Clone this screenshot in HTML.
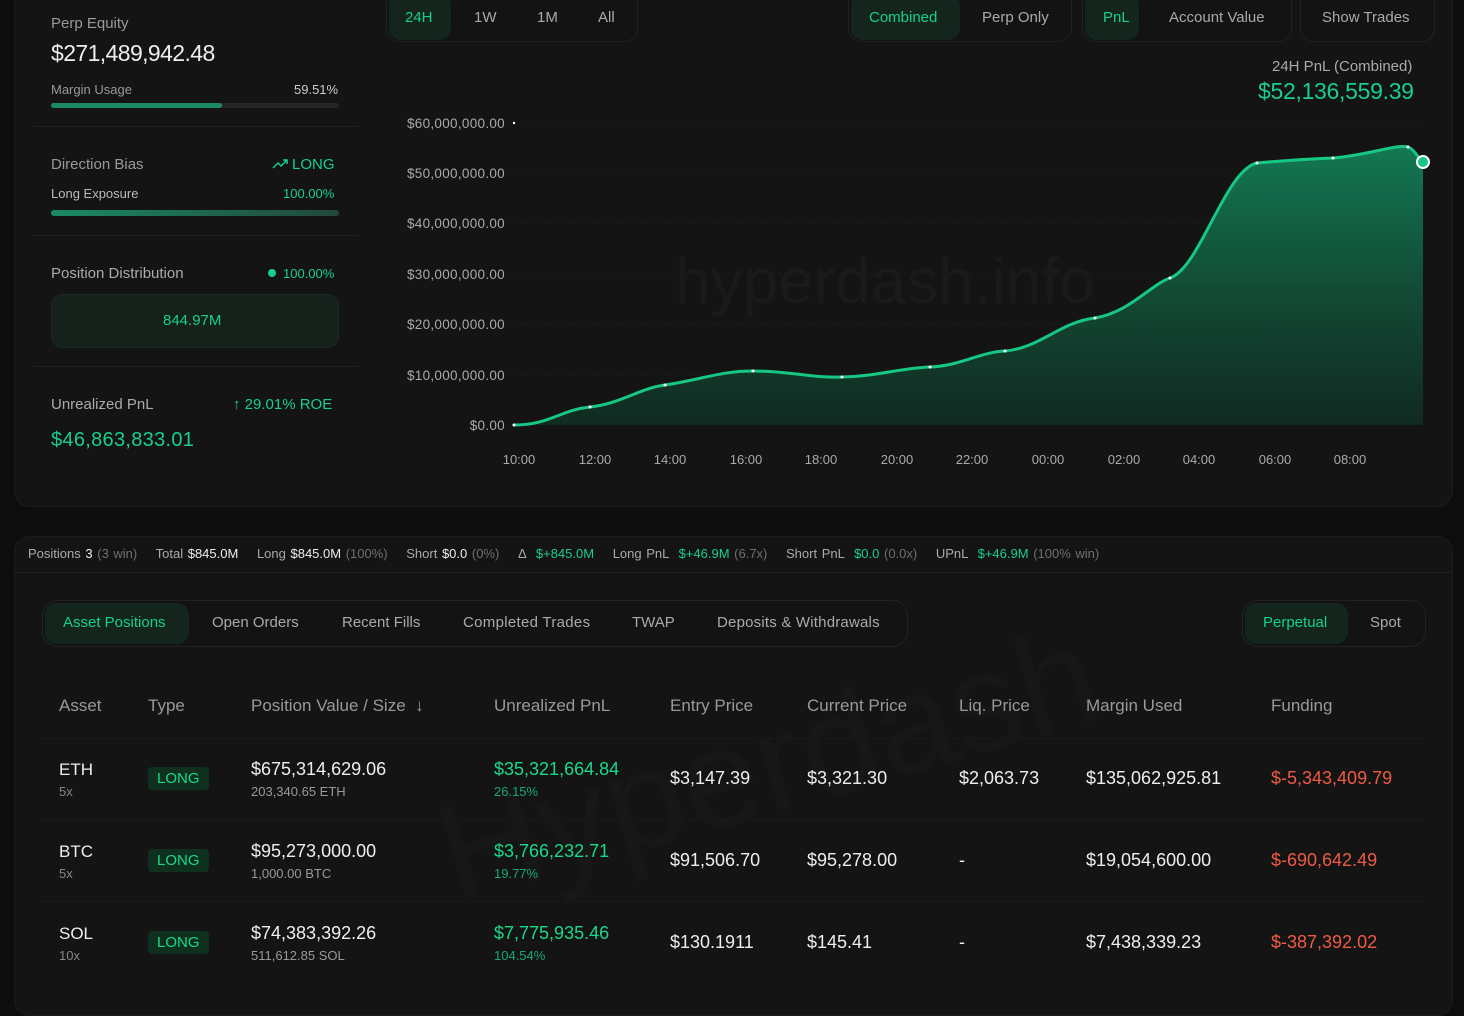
<!DOCTYPE html>
<html><head><meta charset="utf-8"><style>
*{margin:0;padding:0;box-sizing:border-box}
body{width:1464px;height:990px;background:#0d0d0d;font-family:"Liberation Sans",sans-serif;color:#e6e6e6;position:relative;overflow:hidden;letter-spacing:0}
.a{position:absolute;white-space:nowrap}
.g{color:#19cf8c}.m{color:#9a9a9a}.d{color:#6f6f6f}.r{color:#ef5a43}.w{color:#eee}
.card{position:absolute;background:#141414;border:1px solid #1c1c1c}
.pill{position:absolute;border:1px solid #222;border-radius:14px;background:#131313}
.act{position:absolute;background:#14251d;border-radius:12px}
.bar{position:absolute;height:5px;border-radius:3px;background:#262626}
.hl{position:absolute;height:1px;background:#202020}
.long{position:absolute;background:#10301f;color:#19d88c;font-size:15px;border-radius:4px;padding:3px 9px}
.st span.s{margin-right:14px}
</style></head><body>
<div class="card" style="left:14px;top:-20px;width:1439px;height:527px;border-radius:16px"></div>
<div class="a m" style="left:51px;top:15px;font-size:15px">Perp Equity</div>
<div class="a w" style="left:51px;top:40px;font-size:23px;letter-spacing:-0.6px">$271,489,942.48</div>
<div class="a m" style="left:51px;top:82px;font-size:13px">Margin Usage</div>
<div class="a w" style="left:294px;top:82px;font-size:13px;color:#ccc">59.51%</div>
<div class="bar" style="left:51px;top:103px;width:288px"></div>
<div class="bar" style="left:51px;top:103px;width:171px;background:#1a8a62"></div>
<div class="hl" style="left:33px;top:126px;width:325px"></div>
<div class="a m" style="left:51px;top:156px;font-size:15px">Direction Bias</div>
<div class="a g" style="left:272px;top:156px;font-size:15px"><svg width="16" height="12" viewBox="0 0 16 12" style="vertical-align:-1px;margin-right:4px"><path d="M1,10 L6,5 L9,8 L15,2 M11,2 L15,2 L15,6" fill="none" stroke="#19cf8c" stroke-width="1.5"/></svg>LONG</div>
<div class="a m" style="left:51px;top:186px;font-size:13px;color:#bbb">Long Exposure</div>
<div class="a g" style="left:283px;top:186px;font-size:13px">100.00%</div>
<div class="bar" style="left:51px;top:210px;width:288px;height:6px;background:linear-gradient(90deg,#1a8a62,#22483b)"></div>
<div class="hl" style="left:33px;top:235px;width:325px"></div>
<div class="a m" style="left:51px;top:265px;font-size:15px;color:#aaa">Position Distribution</div>
<div class="a" style="left:268px;top:269px;width:8px;height:8px;border-radius:50%;background:#19cf8c"></div>
<div class="a g" style="left:283px;top:266px;font-size:13px">100.00%</div>
<div class="a" style="left:51px;top:294px;width:288px;height:54px;border-radius:12px;background:#15221c;border:1px solid #1c2a23"></div>
<div class="a g" style="left:163px;top:312px;font-size:15px">844.97M</div>
<div class="hl" style="left:33px;top:366px;width:325px"></div>
<div class="a m" style="left:51px;top:396px;font-size:15px;color:#aaa">Unrealized PnL</div>
<div class="a g" style="left:233px;top:396px;font-size:15px">↑ 29.01% ROE</div>
<div class="a g" style="left:51px;top:429px;font-size:20px;letter-spacing:0.3px">$46,863,833.01</div>

<div class="pill" style="left:386px;top:-10px;width:252px;height:52px"></div>
<div class="act" style="left:389px;top:-6px;width:62px;height:46px"></div>
<div class="a g" style="left:405px;top:9px;font-size:15px">24H</div>
<div class="a m" style="left:474px;top:9px;font-size:15px;color:#aaa">1W</div>
<div class="a m" style="left:537px;top:9px;font-size:15px;color:#aaa">1M</div>
<div class="a m" style="left:598px;top:9px;font-size:15px;color:#aaa">All</div>

<div class="pill" style="left:848px;top:-10px;width:224px;height:52px"></div>
<div class="act" style="left:851px;top:-6px;width:109px;height:46px"></div>
<div class="a g" style="left:869px;top:9px;font-size:15px">Combined</div>
<div class="a m" style="left:982px;top:9px;font-size:15px;color:#aaa">Perp Only</div>
<div class="pill" style="left:1082px;top:-10px;width:210px;height:52px"></div>
<div class="act" style="left:1085px;top:-6px;width:54px;height:46px"></div>
<div class="a g" style="left:1103px;top:9px;font-size:15px">PnL</div>
<div class="a m" style="left:1169px;top:9px;font-size:15px;color:#aaa">Account Value</div>
<div class="pill" style="left:1300px;top:-10px;width:135px;height:52px"></div>
<div class="a m" style="left:1322px;top:9px;font-size:15px;color:#aaa">Show Trades</div>

<div class="a m" style="left:1272px;top:58px;font-size:15px;color:#aaa">24H PnL (Combined)</div>
<div class="a g" style="left:1258px;top:78px;font-size:23px;letter-spacing:-0.3px">$52,136,559.39</div>

<svg class="a" style="left:0;top:0" width="1464" height="500">
<defs><linearGradient id="f" x1="0" y1="0" x2="0" y2="1"><stop offset="0" stop-color="#138a5f" stop-opacity=".85"/><stop offset="1" stop-color="#0f3a2a" stop-opacity=".6"/></linearGradient></defs>
<g stroke="#1d1d1d" stroke-dasharray="3 3">
<line x1="514" y1="123" x2="1423" y2="123"/><line x1="514" y1="173" x2="1423" y2="173"/><line x1="514" y1="223" x2="1423" y2="223"/><line x1="514" y1="274" x2="1423" y2="274"/><line x1="514" y1="324" x2="1423" y2="324"/><line x1="514" y1="375" x2="1423" y2="375"/>
</g>
<text x="675" y="303" font-family="Liberation Sans" font-size="64" fill="#1a1a1a">hyperdash.info</text>
<path d="M514,425 C550,425 560,410 590,407 C620,404 640,388 665,385 C700,380 720,371 753,371 C790,371 810,378 842,377 C880,376 900,368 930,367 C960,366 980,352 1005,351 C1040,348 1060,322 1095,318 C1130,312 1150,285 1170,278 C1200,268 1225,170 1257,163 C1290,160 1310,159 1333,158 C1370,155 1395,144 1408,147 C1415,150 1418,158 1423,162 L1423,425 Z" fill="url(#f)"/>
<path d="M514,425 C550,425 560,410 590,407 C620,404 640,388 665,385 C700,380 720,371 753,371 C790,371 810,378 842,377 C880,376 900,368 930,367 C960,366 980,352 1005,351 C1040,348 1060,322 1095,318 C1130,312 1150,285 1170,278 C1200,268 1225,170 1257,163 C1290,160 1310,159 1333,158 C1370,155 1395,144 1408,147 C1415,150 1418,158 1423,162" fill="none" stroke="#17c784" stroke-width="3"/>
<g fill="#fff"><circle cx="514" cy="425" r="1.5"/><circle cx="590" cy="407" r="1.5"/><circle cx="665" cy="385" r="1.5"/><circle cx="753" cy="371" r="1.5"/><circle cx="842" cy="377" r="1.5"/><circle cx="930" cy="367" r="1.5"/><circle cx="1005" cy="351" r="1.5"/><circle cx="1095" cy="318" r="1.5"/><circle cx="1170" cy="278" r="1.5"/><circle cx="1257" cy="163" r="1.5"/><circle cx="1333" cy="158" r="1.5"/><circle cx="1408" cy="147" r="1.5"/><circle cx="514" cy="123" r="1.2"/></g>
<circle cx="1423" cy="162" r="6" fill="#17c784" stroke="#fff" stroke-width="2"/>
<g font-family="Liberation Sans" font-size="13.5" fill="#aaa" text-anchor="end" letter-spacing="0.3">
<text x="505" y="128">$60,000,000.00</text><text x="505" y="178">$50,000,000.00</text><text x="505" y="228">$40,000,000.00</text><text x="505" y="279">$30,000,000.00</text><text x="505" y="329">$20,000,000.00</text><text x="505" y="380">$10,000,000.00</text><text x="505" y="430">$0.00</text>
</g>
<g font-family="Liberation Sans" font-size="13" fill="#aaa" text-anchor="middle">
<text x="519" y="464">10:00</text><text x="595" y="464">12:00</text><text x="670" y="464">14:00</text><text x="746" y="464">16:00</text><text x="821" y="464">18:00</text><text x="897" y="464">20:00</text><text x="972" y="464">22:00</text><text x="1048" y="464">00:00</text><text x="1124" y="464">02:00</text><text x="1199" y="464">04:00</text><text x="1275" y="464">06:00</text><text x="1350" y="464">08:00</text>
</g>
</svg>

<div class="card" style="left:14px;top:536px;width:1439px;height:480px;border-radius:16px"></div>
<div class="hl" style="left:15px;top:572px;width:1437px"></div>
<div class="a st" style="left:28px;top:546px;font-size:13px;color:#aaa;word-spacing:1px"><span class="s">Positions <span class="w">3</span> <span class="d">(3 win)</span></span> <span class="s">Total <span class="w">$845.0M</span></span> <span class="s">Long <span class="w">$845.0M</span> <span class="d">(100%)</span></span> <span class="s">Short <span class="w">$0.0</span> <span class="d">(0%)</span></span> <span class="s">Δ&nbsp; <span class="g">$+845.0M</span></span> <span class="s">Long PnL&nbsp; <span class="g">$+46.9M</span> <span class="d">(6.7x)</span></span> <span class="s">Short PnL&nbsp; <span class="g">$0.0</span> <span class="d">(0.0x)</span></span> <span class="s">UPnL&nbsp; <span class="g">$+46.9M</span> <span class="d">(100% win)</span></span></div>

<div class="pill" style="left:42px;top:600px;width:866px;height:47px;border-radius:16px"></div>
<div class="act" style="left:45px;top:603px;width:144px;height:41px"></div>
<div class="a g" style="left:63px;top:614px;font-size:15px">Asset Positions</div>
<div class="a" style="left:212px;top:614px;font-size:15px;color:#aaa">Open Orders</div>
<div class="a" style="left:342px;top:614px;font-size:15px;color:#aaa">Recent Fills</div>
<div class="a" style="left:463px;top:614px;font-size:15px;color:#aaa;letter-spacing:0.3px">Completed Trades</div>
<div class="a" style="left:632px;top:614px;font-size:15px;color:#aaa">TWAP</div>
<div class="a" style="left:717px;top:614px;font-size:15px;color:#aaa;letter-spacing:0.2px">Deposits &amp; Withdrawals</div>
<div class="pill" style="left:1242px;top:600px;width:184px;height:47px;border-radius:16px"></div>
<div class="act" style="left:1245px;top:603px;width:103px;height:41px"></div>
<div class="a g" style="left:1263px;top:614px;font-size:15px">Perpetual</div>
<div class="a" style="left:1370px;top:614px;font-size:15px;color:#aaa">Spot</div>

<div class="a" style="left:420px;top:780px;font-size:140px;color:#171717;transform:rotate(-16deg);transform-origin:left top">Hyperdash</div>

<div class="a" style="top:696px;left:0;font-size:17px;color:#999;width:1464px">
<span class="a" style="left:59px">Asset</span><span class="a" style="left:148px">Type</span><span class="a" style="left:251px">Position Value / Size &nbsp;↓</span><span class="a" style="left:494px">Unrealized PnL</span><span class="a" style="left:670px">Entry Price</span><span class="a" style="left:807px">Current Price</span><span class="a" style="left:959px">Liq. Price</span><span class="a" style="left:1086px">Margin Used</span><span class="a" style="left:1271px">Funding</span></div>
<div class="hl" style="left:40px;top:738px;width:1386px;background:#191919"></div>
<div class="hl" style="left:40px;top:819px;width:1386px;background:#191919"></div>
<div class="hl" style="left:40px;top:901px;width:1386px;background:#191919"></div>

<div class="a w" style="left:59px;top:760px;font-size:17px">ETH</div><div class="a" style="left:59px;top:784px;font-size:13px;color:#888">5x</div>
<div class="long" style="left:148px;top:767px">LONG</div>
<div class="a w" style="left:251px;top:759px;font-size:18px">$675,314,629.06</div><div class="a" style="left:251px;top:784px;font-size:13px;color:#999">203,340.65 ETH</div>
<div class="a" style="left:494px;top:759px;font-size:18px;color:#1bd98a">$35,321,664.84</div><div class="a" style="left:494px;top:784px;font-size:13px;color:#17a874">26.15%</div>
<div class="a w" style="left:670px;top:768px;font-size:18px">$3,147.39</div>
<div class="a w" style="left:807px;top:768px;font-size:18px">$3,321.30</div>
<div class="a w" style="left:959px;top:768px;font-size:18px">$2,063.73</div>
<div class="a w" style="left:1086px;top:768px;font-size:18px">$135,062,925.81</div>
<div class="a r" style="left:1271px;top:768px;font-size:18px">$-5,343,409.79</div>

<div class="a w" style="left:59px;top:842px;font-size:17px">BTC</div><div class="a" style="left:59px;top:866px;font-size:13px;color:#888">5x</div>
<div class="long" style="left:148px;top:849px">LONG</div>
<div class="a w" style="left:251px;top:841px;font-size:18px">$95,273,000.00</div><div class="a" style="left:251px;top:866px;font-size:13px;color:#999">1,000.00 BTC</div>
<div class="a" style="left:494px;top:841px;font-size:18px;color:#1bd98a">$3,766,232.71</div><div class="a" style="left:494px;top:866px;font-size:13px;color:#17a874">19.77%</div>
<div class="a w" style="left:670px;top:850px;font-size:18px">$91,506.70</div>
<div class="a w" style="left:807px;top:850px;font-size:18px">$95,278.00</div>
<div class="a w" style="left:959px;top:850px;font-size:18px">-</div>
<div class="a w" style="left:1086px;top:850px;font-size:18px">$19,054,600.00</div>
<div class="a r" style="left:1271px;top:850px;font-size:18px">$-690,642.49</div>

<div class="a w" style="left:59px;top:924px;font-size:17px">SOL</div><div class="a" style="left:59px;top:948px;font-size:13px;color:#888">10x</div>
<div class="long" style="left:148px;top:931px">LONG</div>
<div class="a w" style="left:251px;top:923px;font-size:18px">$74,383,392.26</div><div class="a" style="left:251px;top:948px;font-size:13px;color:#999">511,612.85 SOL</div>
<div class="a" style="left:494px;top:923px;font-size:18px;color:#1bd98a">$7,775,935.46</div><div class="a" style="left:494px;top:948px;font-size:13px;color:#17a874">104.54%</div>
<div class="a w" style="left:670px;top:932px;font-size:18px">$130.1911</div>
<div class="a w" style="left:807px;top:932px;font-size:18px">$145.41</div>
<div class="a w" style="left:959px;top:932px;font-size:18px">-</div>
<div class="a w" style="left:1086px;top:932px;font-size:18px">$7,438,339.23</div>
<div class="a r" style="left:1271px;top:932px;font-size:18px">$-387,392.02</div>
</body></html>
